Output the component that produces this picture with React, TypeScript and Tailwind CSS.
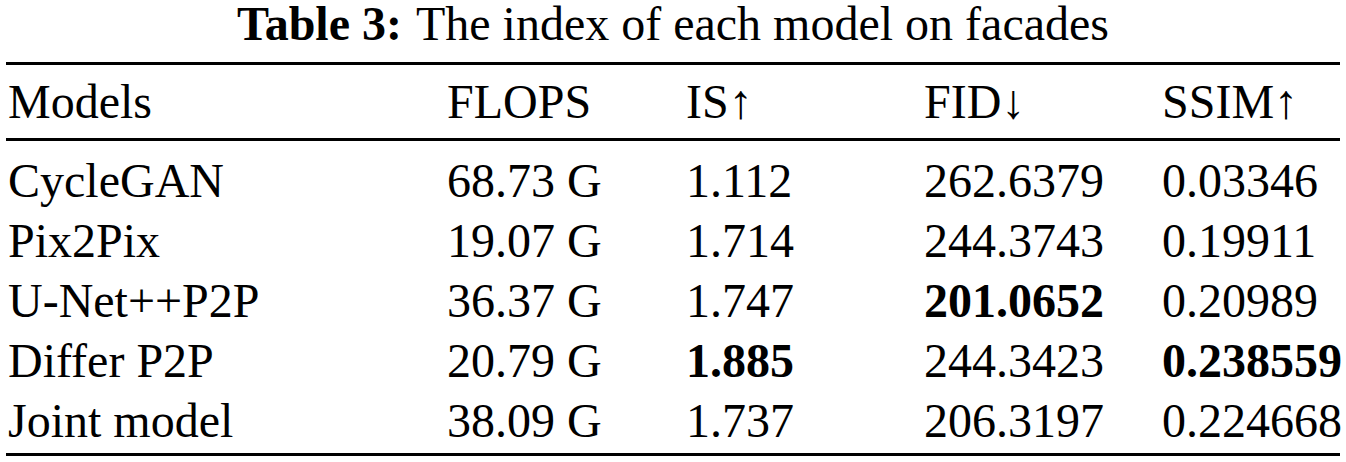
const header = ["Models", "FLOPS", "IS↑", "FID↓", "SSIM↑"];

const rows = [
  { model: "CycleGAN", flops: "68.73 G", is: "1.112", fid: "262.6379", ssim: "0.03346" },
  { model: "Pix2Pix", flops: "19.07 G", is: "1.714", fid: "244.3743", ssim: "0.19911" },
  { model: "U-Net++P2P", flops: "36.37 G", is: "1.747", fid: "201.0652", ssim: "0.20989", bold: ["fid"] },
  { model: "Differ P2P", flops: "20.79 G", is: "1.885", fid: "244.3423", ssim: "0.238559", bold: ["is", "ssim"] },
  { model: "Joint model", flops: "38.09 G", is: "1.737", fid: "206.3197", ssim: "0.224668" }
];

const cols = "grid grid-cols-[439px_239px_238px_238px_1fr]";

export default function App() {
  return (
    <main className="h-[462px] w-[1346px] overflow-hidden bg-white [font-family:'Liberation_Serif','Times_New_Roman',serif] text-[48px] text-black">
      <p className="text-center leading-[48px]">
        <span className="font-bold">Table 3:</span>
        <span className="ml-[14px]">The index of each model on facades</span>
      </p>

      <section className="mx-[6px] mt-[14px] border-t-[3px] border-b-[3px] border-black pb-[2px]">
        <div className={`${cols} border-b-[3px] border-black px-[2px] pt-[7px] pb-[6px] leading-[60px]`}>
          {header.map((h) => (
            <div key={h}>{h}</div>
          ))}
        </div>

        <div className="px-[2px] pt-[10px] leading-[60px]">
          {rows.map((r) => (
            <div className={cols} key={r.model}>
              <div>{r.model}</div>
              <div>{r.flops}</div>
              <div className={r.bold?.includes("is") ? "font-bold" : ""}>{r.is}</div>
              <div className={r.bold?.includes("fid") ? "font-bold" : ""}>{r.fid}</div>
              <div className={r.bold?.includes("ssim") ? "font-bold" : ""}>{r.ssim}</div>
            </div>
          ))}
        </div>
      </section>
    </main>
  );
}
